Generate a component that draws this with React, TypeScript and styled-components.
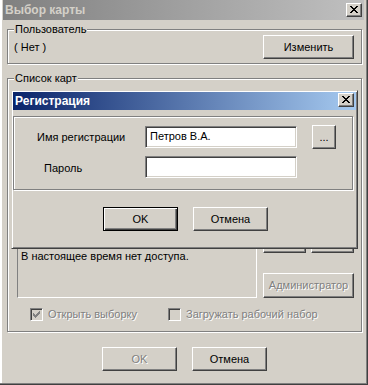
import React from "react";
import styled, { createGlobalStyle, css } from "styled-components";

const Global = createGlobalStyle`
  html, body { margin: 0; padding: 0; background: #d4d0c8; }
  body { font-family: "Liberation Sans", Arial, sans-serif; font-size: 11px; line-height: 13px; color: #000; }
  * { box-sizing: border-box; }
`;

const FACE = "#d4d0c8";

const Window = styled.div`
  position: relative;
  width: 368px;
  height: 385px;
  background: ${FACE};
  padding: 0 4px 3px 3px;
  display: flex;
  flex-direction: column;
  box-shadow: inset -1px -1px #404040, inset -2px -2px #808080, inset 2px 0 #fff;
`;

const TitleBar = styled.div<{ $active?: boolean; $h: number }>`
  height: ${(p) => p.$h}px;
  flex: none;
  display: flex;
  align-items: flex-start;
  justify-content: space-between;
  padding-left: 2px;
  background: ${(p) =>
    p.$active
      ? "linear-gradient(to right, #0a246a, #a6caf0)"
      : "linear-gradient(to right, #808080, #c0c0c0)"};
  color: ${(p) => (p.$active ? "#fff" : FACE)};
  font-weight: bold;
  font-size: 12px;
`;

const TitleText = styled.span<{ $top: number }>`
  margin-top: ${(p) => p.$top}px;
  line-height: 14px;
`;

const CloseBtn = styled.div<{ $top: number }>`
  width: 16px;
  height: 14px;
  margin: ${(p) => p.$top}px 2px 0 0;
  background: ${FACE};
  border: 1px solid;
  border-color: #fff #404040 #404040 #fff;
  box-shadow: inset -1px -1px #808080;
  display: flex;
  align-items: center;
  justify-content: center;
  padding: 0 0 1px 0;
`;

const Body = styled.div`
  display: flex;
  flex-direction: column;
  padding: 9px 2px 0 4px;
`;

const Group = styled.div`
  position: relative;
  border: 1px solid #808080;
  box-shadow: 1px 1px 0 #fff, inset 1px 1px 0 #fff;
`;

const GroupCaption = styled.span`
  position: absolute;
  top: -7px;
  left: 6px;
  padding: 0 1px;
  background: ${FACE};
  line-height: 13px;
`;

const UserGroup = styled(Group)`
  margin-bottom: 14px;
  padding: 5px 7px 4px 6px;
  display: flex;
  align-items: center;
  justify-content: space-between;
`;

const MapGroup = styled(Group)`
  padding: 13px 7px 10px 9px;
  display: flex;
  flex-direction: column;
`;

const MainRow = styled.div`
  height: 206px;
  display: flex;
  gap: 6px;
`;

const LeftCol = styled.div`
  width: 240px;
  display: flex;
  flex-direction: column;
`;

const RightCol = styled.div`
  width: 91px;
  display: flex;
  flex-direction: column;
  justify-content: flex-end;
`;

const ListBox = styled.div`
  flex: 1;
  background: #fff;
  border: 1px solid;
  border-color: #808080 #fff #fff #808080;
  box-shadow: inset 1px 1px #404040, inset -1px -1px ${FACE};
`;

const MessageBox = styled.div`
  height: 50px;
  margin-top: 7px;
  border: 1px solid;
  border-color: #808080 #fff #fff #808080;
  padding: 1px 3px;
`;

const SmallRow = styled.div`
  display: flex;
  gap: 5px;
  margin-bottom: 20px;
`;

const Button = styled.button<{ $w: number; $h?: number; $default?: boolean }>`
  width: ${(p) => p.$w}px;
  height: ${(p) => p.$h ?? 24}px;
  flex: none;
  padding: 0;
  margin: 0;
  font: inherit;
  font-size: 11px;
  color: #000;
  background: ${FACE};
  border: 1px solid;
  border-color: #fff #404040 #404040 #fff;
  box-shadow: inset -1px -1px #808080, inset 1px 1px ${FACE};
  display: flex;
  align-items: center;
  justify-content: center;
  ${(p) =>
    p.$default &&
    css`
      border-color: #000;
      box-shadow: inset 1px 1px #fff, inset -1px -1px #404040, inset -2px -2px #808080;
    `}
  &:disabled {
    color: #808080;
    text-shadow: 1px 1px 0 #fff;
  }
`;

const CheckRow = styled.div`
  margin-top: 10px;
  padding-left: 13px;
  display: grid;
  grid-template-columns: 138px auto;
  height: 13px;
`;

const CheckItem = styled.label<{ $disabled?: boolean }>`
  display: flex;
  align-items: center;
  gap: 5px;
  height: 13px;
  ${(p) =>
    p.$disabled &&
    css`
      color: #808080;
      text-shadow: 1px 1px 0 #fff;
    `}
`;

const CheckBox = styled.span<{ $disabled?: boolean }>`
  width: 13px;
  height: 13px;
  flex: none;
  border: 1px solid;
  border-color: #808080 #fff #fff #808080;
  box-shadow: inset 1px 1px #404040, inset -1px -1px ${FACE};
  background: ${(p) => (p.$disabled ? FACE : "#fff")};
  display: flex;
  padding: 2px;
`;

const ButtonRow = styled.div<{ $mt: number; $pl?: number }>`
  margin-top: ${(p) => p.$mt}px;
  padding-left: ${(p) => p.$pl ?? 0}px;
  display: flex;
  justify-content: center;
  gap: 15px;
`;

/* ---------- modal dialog ---------- */

const Dialog = styled.div`
  position: absolute;
  left: 11px;
  top: 90px;
  width: 347px;
  height: 159px;
  background: ${FACE};
  border: 1px solid;
  border-color: ${FACE} #404040 #404040 ${FACE};
  box-shadow: inset 1px 1px #fff, inset -1px -1px #808080;
  padding: 1px;
  display: flex;
  flex-direction: column;
`;

const DialogClient = styled.div`
  padding: 0;
  display: flex;
  flex-direction: column;
`;

const RegGroup = styled(Group)`
  margin: 6px 3px 0 0;
  height: 74px;
  padding: 8px 0 0 23px;
  display: grid;
  grid-template-columns: 93px 152px 24px;
  grid-template-rows: 24px 24px;
  column-gap: 15px;
  row-gap: 6px;
`;

const FieldLabel = styled.span<{ $indent?: number; $drop?: number }>`
  align-self: center;
  padding-left: ${(p) => p.$indent ?? 0}px;
  margin-top: ${(p) => p.$drop ?? 0}px;
  white-space: nowrap;
`;

const Edit = styled.div`
  align-self: center;
  height: 22px;
  background: #fff;
  border: 1px solid;
  border-color: #808080 #fff #fff #808080;
  box-shadow: inset 1px 1px #404040, inset -1px -1px ${FACE};
  padding: 3px 4px;
  line-height: 13px;
  white-space: nowrap;
`;

const CloseGlyph = () => (
  <svg width="8" height="7" viewBox="0 0 8 7" shapeRendering="crispEdges">
    <path
      fill="#000"
      d="M0 0h2v1H0zM6 0h2v1H6zM1 1h2v1H1zM5 1h2v1H5zM2 2h4v1H2zM3 3h2v1H3zM2 4h4v1H2zM1 5h2v1H1zM5 5h2v1H5zM0 6h2v1H0zM6 6h2v1H6z"
    />
  </svg>
);

const CheckGlyph = ({ color }: { color: string }) => (
  <svg width="7" height="7" viewBox="0 0 7 7" shapeRendering="crispEdges">
    <path
      fill={color}
      d="M6 0h1v1H6zM5 1h2v1H5zM0 2h1v1H0zM4 2h3v1H4zM0 3h2v1H0zM3 3h3v1H3zM0 4h5v1H0zM1 5h3v1H1zM2 6h1v1H2z"
    />
  </svg>
);

export default function App() {
  return (
    <>
      <Global />
      <Window>
        <TitleBar $h={20}>
          <TitleText $top={3}>Выбор карты</TitleText>
          <CloseBtn $top={3}>
            <CloseGlyph />
          </CloseBtn>
        </TitleBar>
        <Body>
          <UserGroup>
            <GroupCaption>Пользователь</GroupCaption>
            <span>( Нет )</span>
            <Button $w={91}>Изменить</Button>
          </UserGroup>
          <MapGroup>
            <GroupCaption>Список карт</GroupCaption>
            <MainRow>
              <LeftCol>
                <ListBox />
                <MessageBox>В настоящее время нет доступа.</MessageBox>
              </LeftCol>
              <RightCol>
                <SmallRow>
                  <Button $w={43} />
                  <Button $w={43} />
                </SmallRow>
                <Button $w={91} $h={25} disabled>
                  Администратор
                </Button>
              </RightCol>
            </MainRow>
            <CheckRow>
              <CheckItem $disabled>
                <CheckBox $disabled>
                  <CheckGlyph color="#808080" />
                </CheckBox>
                Открыть выборку
              </CheckItem>
              <CheckItem $disabled>
                <CheckBox $disabled />
                Загружать рабочий набор
              </CheckItem>
            </CheckRow>
          </MapGroup>
          <ButtonRow $mt={15}>
            <Button $w={75} disabled>
              OK
            </Button>
            <Button $w={75}>Отмена</Button>
          </ButtonRow>
        </Body>

        <Dialog>
          <TitleBar $active $h={18}>
            <TitleText $top={2}>Регистрация</TitleText>
            <CloseBtn $top={1}>
              <CloseGlyph />
            </CloseBtn>
          </TitleBar>
          <DialogClient>
            <RegGroup>
              <FieldLabel>Имя регистрации</FieldLabel>
              <Edit>Петров В.А.</Edit>
              <Button $w={24} style={{ alignSelf: "center" }}>
                ...
              </Button>
              <FieldLabel $indent={7} $drop={3}>
                Пароль
              </FieldLabel>
              <Edit />
            </RegGroup>
            <ButtonRow $mt={17} $pl={2}>
              <Button $w={75} $default>
                OK
              </Button>
              <Button $w={75}>Отмена</Button>
            </ButtonRow>
          </DialogClient>
        </Dialog>
      </Window>
    </>
  );
}
